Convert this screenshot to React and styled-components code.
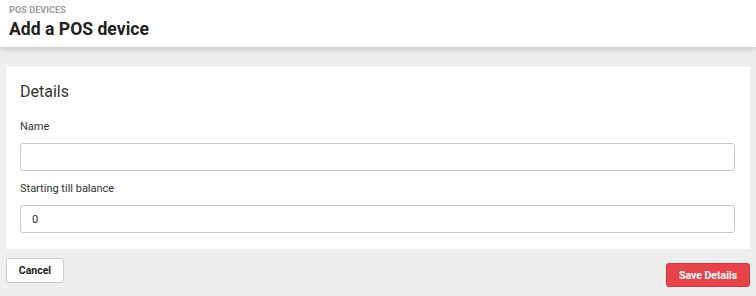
import React from "react";
import styled, { createGlobalStyle } from "styled-components";

const Global = createGlobalStyle`
  html, body { margin: 0; padding: 0; background: #eeeeee; }
  body { font-family: Roboto, "Liberation Sans", Arial, sans-serif; color: #333; }
  * { box-sizing: border-box; }
`;

const Page = styled.div`
  width: 756px;
  height: 296px;
  background: #eeeeee;
  overflow: hidden;
`;

const Header = styled.header`
  height: 47px;
  background: #ffffff;
  padding: 5px 9px 0;
  box-shadow: 0 2px 6px rgba(0, 0, 0, 0.18);
  position: relative;
  z-index: 1;
`;

const Eyebrow = styled.div`
  font-size: 9px;
  font-weight: 700;
  color: #9a9a9a;
  line-height: 11px;
  letter-spacing: 0.1px;
`;

const Title = styled.h1`
  margin: 2px 0 0;
  font-size: 17.6px;
  font-weight: 700;
  color: #222;
  line-height: 22px;
`;

const Main = styled.main`
  padding: 20px 6px 0;
`;

const Card = styled.section`
  background: #ffffff;
  padding: 15px 15px 15px 14px;
  height: 182px;
`;

const CardTitle = styled.h2`
  margin: 0;
  font-size: 16px;
  font-weight: 400;
  color: #333;
  line-height: 20px;
`;

const Field = styled.div`
  margin-top: ${(p) => p.$top}px;
  display: flex;
  flex-direction: column;
`;

const Label = styled.label`
  font-size: 11px;
  color: #333;
  line-height: 13px;
`;

const Input = styled.input`
  margin-top: 10px;
  height: 28px;
  border: 1px solid #c8c8c8;
  border-radius: 3px;
  padding: 0 11px;
  font-family: inherit;
  font-size: 11px;
  color: #333;
  background: #fff;
  outline: none;
`;

const Actions = styled.div`
  display: flex;
  justify-content: space-between;
  align-items: flex-start;
  padding-top: 9px;
`;

const Button = styled.button`
  height: ${(p) => (p.$primary ? 24 : 25)}px;
  width: ${(p) => (p.$primary ? 84 : 58)}px;
  margin-top: ${(p) => (p.$primary ? 5 : 0)}px;
  padding: 0;
  white-space: nowrap;
  border-radius: 3px;
  font-family: inherit;
  font-size: 10.5px;
  font-weight: 700;
  cursor: pointer;
  border: 1px solid ${(p) => (p.$primary ? "#d8323c" : "#cccccc")};
  background: ${(p) => (p.$primary ? "#e6434b" : "#ffffff")};
  color: ${(p) => (p.$primary ? "#ffffff" : "#222")};
`;

export default function App() {
  return (
    <Page>
      <Global />
      <Header>
        <Eyebrow>POS DEVICES</Eyebrow>
        <Title>Add a POS device</Title>
      </Header>
      <Main>
        <Card>
          <CardTitle>Details</CardTitle>
          <Field $top={18}>
            <Label>Name</Label>
            <Input defaultValue="" />
          </Field>
          <Field $top={11}>
            <Label>Starting till balance</Label>
            <Input defaultValue="0" />
          </Field>
        </Card>
        <Actions>
          <Button>Cancel</Button>
          <Button $primary>Save Details</Button>
        </Actions>
      </Main>
    </Page>
  );
}
